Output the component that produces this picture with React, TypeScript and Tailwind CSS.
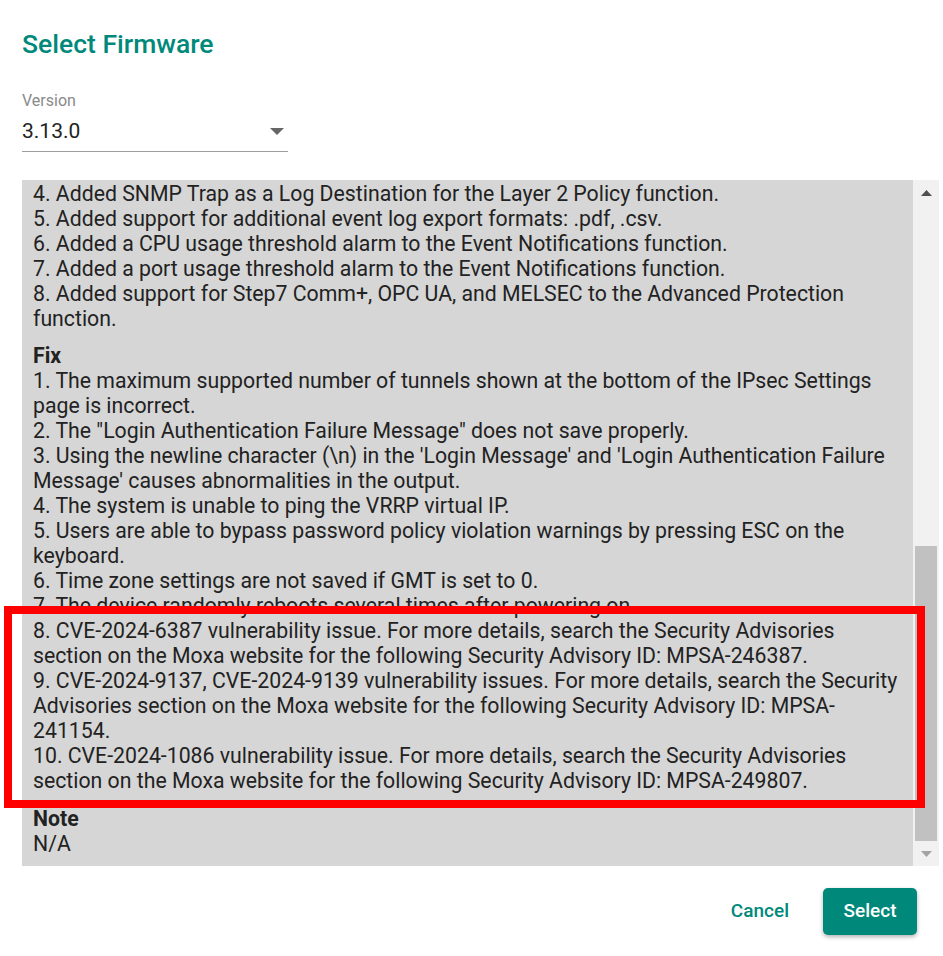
import React from "react";

type Section = {
  title?: string;
  items: string[];
};

const sections: Section[] = [
  {
    items: [
      "4. Added SNMP Trap as a Log Destination for the Layer 2 Policy function.",
      "5. Added support for additional event log export formats: .pdf, .csv.",
      "6. Added a CPU usage threshold alarm to the Event Notifications function.",
      "7. Added a port usage threshold alarm to the Event Notifications function.",
      "8. Added support for Step7 Comm+, OPC UA, and MELSEC to the Advanced Protection function.",
    ],
  },
  {
    title: "Fix",
    items: [
      "1. The maximum supported number of tunnels shown at the bottom of the IPsec Settings page is incorrect.",
      '2. The "Login Authentication Failure Message" does not save properly.',
      "3. Using the newline character (\\n) in the 'Login Message' and 'Login Authentication Failure Message' causes abnormalities in the output.",
      "4. The system is unable to ping the VRRP virtual IP.",
      "5. Users are able to bypass password policy violation warnings by pressing ESC on the keyboard.",
      "6. Time zone settings are not saved if GMT is set to 0.",
      "7. The device randomly reboots several times after powering on.",
      "8. CVE-2024-6387 vulnerability issue. For more details, search the Security Advisories section on the Moxa website for the following Security Advisory ID: MPSA-246387.",
      "9. CVE-2024-9137, CVE-2024-9139 vulnerability issues. For more details, search the Security Advisories section on the Moxa website for the following Security Advisory ID: MPSA-241154.",
      "10. CVE-2024-1086 vulnerability issue. For more details, search the Security Advisories section on the Moxa website for the following Security Advisory ID: MPSA-249807.",
    ],
  },
  {
    title: "Note",
    items: ["N/A"],
  },
];

const Triangle = ({ up, color }: { up?: boolean; color: string }) => (
  <svg width="11" height="6" viewBox="0 0 11 6">
    {up ? (
      <polygon points="0,6 11,6 5.5,0" fill={color} />
    ) : (
      <polygon points="0,0 11,0 5.5,6" fill={color} />
    )}
  </svg>
);

export default function App() {
  return (
    <div className="relative w-[943px] h-[956px] bg-white pl-[22px] pr-[4px] font-['Roboto',sans-serif]">
      <h1 className="pt-[28px] text-[26.5px] leading-[32px] font-medium text-[#00897b]">
        Select Firmware
      </h1>

      <div className="mt-[31px] w-[266px]">
        <div className="text-[16px] leading-[20px] text-[#8a8a8a]">Version</div>
        <div className="mt-[6px] flex items-center justify-between border-b border-[#9e9e9e] pb-[6px]">
          <span className="text-[21px] leading-[28px] text-[#222]">3.13.0</span>
          <span className="mr-[4px] flex">
            <svg width="14" height="7" viewBox="0 0 14 7">
              <polygon points="0,0 14,0 7,7" fill="#666" />
            </svg>
          </span>
        </div>
      </div>

      <div className="mt-[28px] flex h-[686px]">
        <div className="flex-1 overflow-hidden bg-[#d6d6d6] pt-[1px] pl-[11px] pr-[8px] text-[21.25px] leading-[25px] text-[#222]">
          {sections.map((section, i) => (
            <div key={i} className={i === 1 ? "mt-[12px]" : i === 2 ? "mt-[13px]" : ""}>
              {section.title && <div className="font-bold">{section.title}</div>}
              {section.items.map((item) => (
                <div key={item}>{item}</div>
              ))}
            </div>
          ))}
        </div>
        <div className="flex w-[26px] flex-col bg-[#f1f1f1]">
          <div className="flex h-[25px] items-center justify-center">
            <Triangle up color="#505050" />
          </div>
          <div className="flex-1" />
          <div className="mx-[2px] h-[295px] bg-[#c1c1c1]" />
          <div className="flex h-[25px] items-center justify-center">
            <Triangle color="#a3a3a3" />
          </div>
        </div>
      </div>

      <div className="mt-[22px] mr-[22px] flex items-center justify-end gap-[18px]">
        <button className="h-[47px] px-[16px] text-[19px] font-medium text-[#00897b]">
          Cancel
        </button>
        <button className="h-[47px] w-[94px] rounded-[5px] bg-[#00897b] text-[19px] font-medium text-white shadow-[0_2px_4px_rgba(0,0,0,0.3)]">
          Select
        </button>
      </div>

      <div className="absolute left-[4px] top-[606px] h-[202px] w-[921px] border-[8px] border-[#ff0000]" />
    </div>
  );
}
